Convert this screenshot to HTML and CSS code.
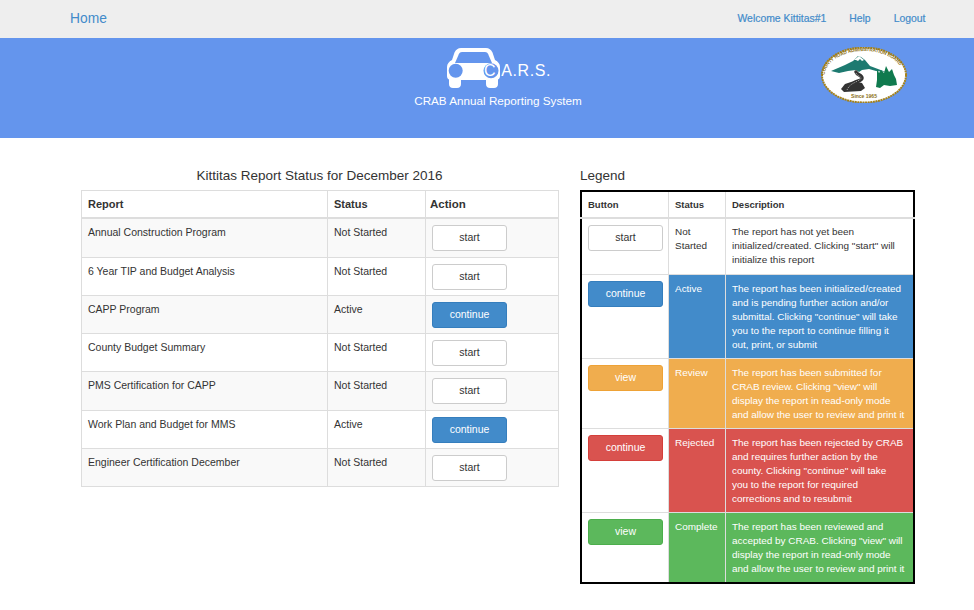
FILE: index.html
```html
<!DOCTYPE html>
<html lang="en">
<head>
<meta charset="utf-8">
<title>C.A.R.S.</title>
<link rel="stylesheet" href="styles.css">
</head>
<body>
<nav class="nav">
  <a class="home" href="#">Home</a>
  <div class="nav-links">
    <a href="#">Welcome Kittitas#1</a>
    <a href="#">Help</a>
    <a href="#">Logout</a>
  </div>
</nav>
<header class="banner">
  <div class="brand">
    <div class="brand-top">
      <svg class="car" viewBox="0 0 53 40" width="53" height="40" aria-hidden="true">
        <path fill="#fff" d="M14 0h25c3 0 5 1.500 6.500 4.500L48 12c3 1.500 5 4 5 7v9c0 2-.8 3-2 3.500V36c0 2.500-1.500 4-4 4h-4c-2.500 0-4-1.500-4-4v-4H14v4c0 2.500-1.500 4-4 4H6c-2.500 0-4-1.500-4-4v-4.500C.8 31 0 30 0 28v-9c0-3 2-5.500 5-7l2.500-7.500C9 1.500 11 0 14 0z"/>
        <path fill="#6495ed" d="M15 4h23c1.500 0 2.500.7 3.200 2.200L45 15H8l3.800-8.800C12.500 4.700 13.500 4 15 4z"/>
        <circle cx="8.700" cy="22.700" r="7" fill="#6495ed"/>
        <circle cx="44" cy="22.700" r="7.500" fill="#6495ed"/>
      </svg>
      <span class="cars">C.A.R.S.</span>
    </div>
    <div class="subtitle">CRAB Annual Reporting System</div>
  </div>
  <svg class="seal" viewBox="0 0 86 56" width="86" height="56" aria-hidden="true">
    <defs>
      <path id="arcTop" d="M3.500 29A39.500 25 0 0 1 82.500 29"/>
    </defs>
    <ellipse cx="43" cy="28" rx="42" ry="27.500" fill="#fff" stroke="#a5821a" stroke-width="2" stroke-dasharray="2 .6"/>
    <text class="seal-text" font-size="4.600" font-weight="700" fill="#8a6d14"><textPath href="#arcTop" textLength="90" lengthAdjust="spacing" startOffset="1">COUNTY ROAD ADMINISTRATION BOARD</textPath></text>
    <path fill="#1d7a70" d="M10 24l14-6 8-4 5-5 3 1 4 3 5 6 8 3 8 3-10-1-7-2-7 1-3 2-3-2-8 1-9 2z"/>
    <path fill="#fff" d="M33 13l5-4 5 4-2 1-2-2-2 2-2-1z"/>
    <path fill="#0f7a4e" d="M56 22l2 4 2-3 3 3 2-7 3 6 3-3 2 6 2 4 1 6-7 1-6-1-4 3-4-1 1-7z"/>
    <path fill="none" stroke="#333" stroke-width="3.500" stroke-linecap="round" d="M35 25c1 3 6 3 6 6s-6 3-8 5"/>
    <path fill="#333" d="M33 34l8 2 3 5-4 3-17 1-3-3 4-5z"/>
    <path fill="none" stroke="#fff" stroke-width=".5" stroke-dasharray="1.500 1" d="M35 26c1 3 5 3 5 5s-6 4-9 6-4 4-5 6"/>
    <text class="seal-text" x="43" y="51" font-size="5" font-weight="700" text-anchor="middle" fill="#8a6d14">Since 1965</text>
  </svg>
</header>
<main class="content">
  <section class="status">
    <h2 class="title title-center">Kittitas Report Status for December 2016</h2>
    <table class="report">
      <colgroup><col class="c-report"><col class="c-status"><col class="c-action"></colgroup>
      <thead><tr><th>Report</th><th>Status</th><th class="th-action">Action</th></tr></thead>
      <tbody>
        <tr><td>Annual Construction Program</td><td>Not Started</td><td><a class="btn" href="#">start</a></td></tr>
        <tr><td>6 Year TIP and Budget Analysis</td><td>Not Started</td><td><a class="btn" href="#">start</a></td></tr>
        <tr><td>CAPP Program</td><td>Active</td><td><a class="btn blue" href="#">continue</a></td></tr>
        <tr><td>County Budget Summary</td><td>Not Started</td><td><a class="btn" href="#">start</a></td></tr>
        <tr><td>PMS Certification for CAPP</td><td>Not Started</td><td><a class="btn" href="#">start</a></td></tr>
        <tr><td>Work Plan and Budget for MMS</td><td>Active</td><td><a class="btn blue" href="#">continue</a></td></tr>
        <tr><td>Engineer Certification December</td><td>Not Started</td><td><a class="btn" href="#">start</a></td></tr>
      </tbody>
    </table>
  </section>
  <section class="legend">
    <h2 class="title">Legend</h2>
    <table class="key">
      <colgroup><col class="k-button"><col class="k-status"><col class="k-desc"></colgroup>
      <thead><tr><th>Button</th><th class="stat">Status</th><th class="desc">Description</th></tr></thead>
      <tbody>
        <tr class="row-plain"><td><a class="btn" href="#">start</a></td><td class="stat">Not Started</td><td class="desc">The report has not yet been initialized/created. Clicking "start" will initialize this report</td></tr>
        <tr class="row-blue"><td><a class="btn blue" href="#">continue</a></td><td class="stat">Active</td><td class="desc">The report has been initialized/created and is pending further action and/or submittal. Clicking "continue" will take you to the report to continue filling it<br>out, print, or submit</td></tr>
        <tr class="row-orange"><td><a class="btn orange" href="#">view</a></td><td class="stat">Review</td><td class="desc">The report has been submitted for CRAB review. Clicking "view" will display the report in read-only mode and allow the user to review and print it</td></tr>
        <tr class="row-red"><td><a class="btn red" href="#">continue</a></td><td class="stat">Rejected</td><td class="desc">The report has been rejected by CRAB and requires further action by the county. Clicking "continue" will take<br>you to the report for required<br>corrections and to resubmit</td></tr>
        <tr class="row-green"><td><a class="btn green" href="#">view</a></td><td class="stat">Complete</td><td class="desc">The report has been reviewed and accepted by CRAB. Clicking "view" will display the report in read-only mode and allow the user to review and print it</td></tr>
      </tbody>
    </table>
  </section>
</main>
</body>
</html>
```
FILE: styles.css
```css
* { box-sizing: border-box; }
html, body { margin: 0; padding: 0; }
body {
  font-family: "Liberation Sans", Arial, sans-serif;
  font-size: 12px;
  color: #333;
  background: #fff;
}
a { text-decoration: none; }

.nav {
  height: 38px;
  background: #eee;
  display: flex;
  align-items: center;
  justify-content: space-between;
  padding: 0 48.600px 2px 70px;
}
.home { color: #428bca; font-size: 13.800px; }
.nav-links { display: flex; gap: 23px; }
.nav-links a { color: #428bca; font-size: 10.400px; -webkit-text-stroke: 0.2px #428bca; }

.banner {
  position: relative;
  height: 100px;
  background: #6495ed;
  display: flex;
  justify-content: center;
  padding-left: 22px;
}
.brand { display: flex; flex-direction: column; align-items: center; padding-top: 10px; }
.brand-top { position: relative; width: 104px; height: 40px; }
.car { position: absolute; left: 1px; top: 0; }
.cars {
  position: absolute;
  left: 38px;
  top: 14px;
  color: #fff;
  font-size: 16px;
  letter-spacing: 0.6px;
  white-space: nowrap;
}
.subtitle { color: #fff; font-size: 11.700px; margin-top: 6px; white-space: nowrap; }
.seal { position: absolute; left: 821px; top: 9px; }
.seal-text { font-family: "Liberation Sans", Arial, sans-serif; }

.content {
  display: flex;
  gap: 22px;
  padding: 28px 0 0 81px;
  align-items: flex-start;
}
.status { width: 477px; }
.title {
  margin: 0;
  height: 24px;
  line-height: 20px;
  font-size: 13.500px;
  font-weight: 400;
  color: #333;
}
.title-center { text-align: center; }

table { border-collapse: collapse; table-layout: fixed; width: 100%; }
.c-report { width: 246px; }
.c-status { width: 98px; }
.c-action { width: 133px; }
.report th, .report td { border: 1px solid #ddd; text-align: left; vertical-align: top; padding: 6px; }
.report th { font-size: 11px; line-height: 15px; height: 27px; padding: 6px 6px 4px; border-bottom-width: 2px; }
.report .th-action { padding-left: 4px; font-size: 11.500px; }
.report td { height: 38px; padding-bottom: 4px; line-height: 15px; font-size: 10.500px; }
.report tbody tr:nth-child(1) td { height: 40px; }
.report tbody tr:nth-child(5) td { height: 39px; }
.report tbody tr:nth-child(odd) td { background: #f9f9f9; }

.btn {
  display: block;
  width: 75px;
  height: 26px;
  line-height: 23px;
  border: 1px solid #ccc;
  border-radius: 3px;
  background: #fff;
  color: #333;
  font-size: 10.500px;
  text-align: center;
}
.blue { background: #428bca; border-color: #357ebd; color: #fff; }
.orange { background: #f0ad4e; border-color: #eea236; color: #fff; }
.red { background: #d9534f; border-color: #d43f3a; color: #fff; }
.green { background: #5cb85c; border-color: #4cae4c; color: #fff; }

.legend { width: 333px; }
.k-button { width: 87px; }
.k-status { width: 57px; }
.k-desc { width: 189px; }
.key { border: 2px solid #000; }
.key th, .key td {
  border: 1px solid #ddd;
  text-align: left;
  vertical-align: top;
  padding: 6px;
  font-size: 9.950px;
  line-height: 14.200px;
}
.key th { height: 27px; padding-top: 6px; padding-bottom: 4px; font-size: 9.500px; border-bottom-width: 2px; }
.key .stat { padding-left: 6.500px; }
.key .desc { padding-left: 6.500px; padding-right: 4px; }
.key .row-plain td { height: 56px; }
.row-blue td:not(:first-child),
.row-orange td:not(:first-child),
.row-red td:not(:first-child),
.row-green td:not(:first-child) { color: #fff; padding-top: 7px; padding-bottom: 5px; }
.key .row-orange td { height: 70px; }
.key .row-green td { height: 71px; }
.row-blue td:not(:first-child) { background: #428bca; }
.row-orange td:not(:first-child) { background: #f0ad4e; }
.row-red td:not(:first-child) { background: #d9534f; }
.row-green td:not(:first-child) { background: #5cb85c; }
```
